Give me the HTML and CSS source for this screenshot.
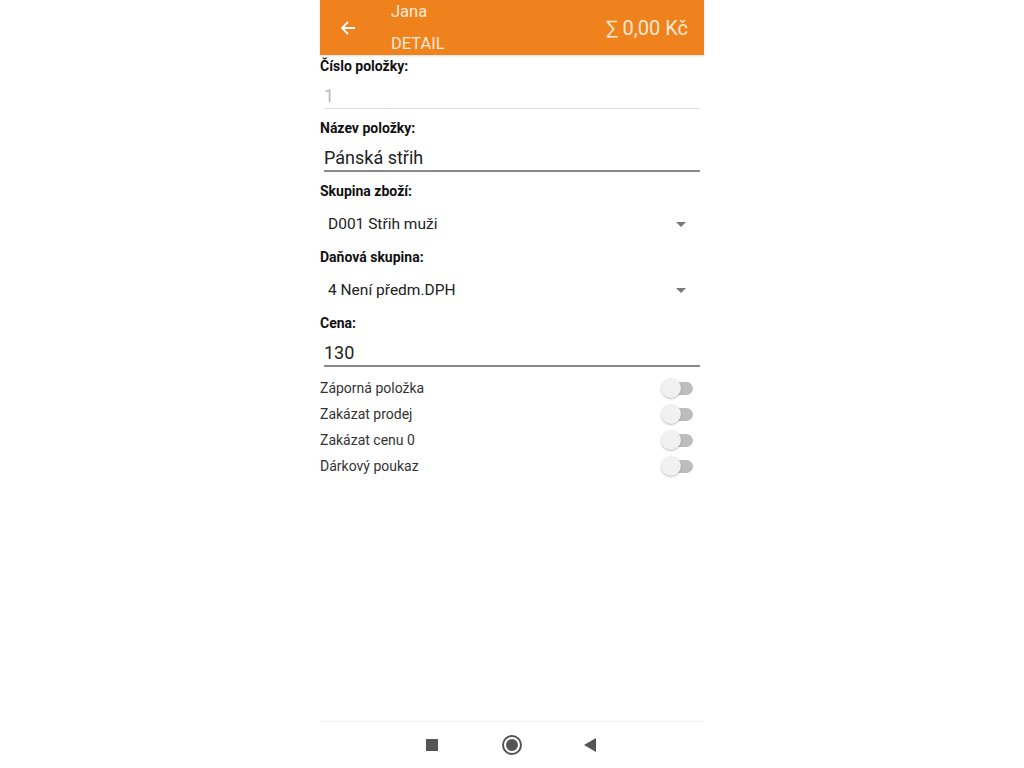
FILE: index.html
```html
<!DOCTYPE html>
<html lang="cs">
<head>
    <meta charset="UTF-8">
    <meta name="viewport" content="width=device-width, initial-scale=1.0">
    <title>Detail položky</title>
    <link rel="stylesheet" href="styles.css">
</head>
<body>
    <div class="phone">
        <div class="toolbar">
            <div class="back">
                <svg width="16" height="16" viewBox="0 0 16 16">
                    <path d="M15 8H2M8 2L2 8l6 6" fill="none" stroke="#fff" stroke-width="1.8"/>
                </svg>
            </div>
            <div class="titles">
                <div class="user">Jana</div>
                <div class="subtitle">DETAIL</div>
            </div>
            <div class="total">∑ 0,00 Kč</div>
        </div>

        <div class="form">
            <div class="label">Číslo položky:</div>
            <div class="input disabled">1</div>

            <div class="label">Název položky:</div>
            <div class="input">Pánská střih</div>

            <div class="label">Skupina zboží:</div>
            <div class="select">
                <span>D001 Střih muži</span>
                <span class="caret"></span>
            </div>

            <div class="label">Daňová skupina:</div>
            <div class="select">
                <span>4 Není předm.DPH</span>
                <span class="caret"></span>
            </div>

            <div class="label">Cena:</div>
            <div class="input">130</div>

            <div class="switches">
                <div class="switch-row"><span>Záporná položka</span><span class="switch"></span></div>
                <div class="switch-row"><span>Zakázat prodej</span><span class="switch"></span></div>
                <div class="switch-row"><span>Zakázat cenu 0</span><span class="switch"></span></div>
                <div class="switch-row"><span>Dárkový poukaz</span><span class="switch"></span></div>
            </div>
        </div>

        <div class="navbar">
            <span class="nav-square"></span>
            <span class="nav-home"></span>
            <span class="nav-back"></span>
        </div>
    </div>
</body>
</html>
```

FILE: styles.css
```css
body {
    margin: 0;
    background-color: #fff;
    font-family: Roboto, "Noto Sans", Arial, sans-serif;
}
.phone {
    width: 384px;
    height: 768px;
    margin: 0 auto;
    display: flex;
    flex-direction: column;
}
.toolbar {
    height: 55px;
    flex-shrink: 0;
    background-color: #f0821e;
    display: flex;
    align-items: center;
    color: #fde9d3;
    box-shadow: 0 1px 2px rgba(0, 0, 0, 0.15);
}
.back {
    width: 56px;
    display: flex;
    justify-content: center;
    margin-top: 1px;
}
.titles {
    flex-grow: 1;
    align-self: flex-start;
    padding-left: 15px;
    height: 55px;
}
.user {
    font-size: 16.5px;
    line-height: 24px;
}
.subtitle {
    font-size: 16.5px;
    line-height: 24px;
    margin-top: 8px;
}
.total {
    font-size: 20px;
    padding-right: 16px;
    margin-top: 1px;
}
.form {
    flex-grow: 1;
    display: flex;
    flex-direction: column;
    padding-top: 1px;
}
.label {
    font-size: 14px;
    font-weight: bold;
    color: #111;
    line-height: 20px;
}
.input {
    margin: 0 4px 9px 4px;
    font-size: 18px;
    color: #222;
    line-height: 20px;
    padding: 10px 0 2px 0;
    border-bottom: 2px solid #888;
}
.input.disabled {
    color: #bbb;
    border-bottom: 1px solid #ddd;
}
.select {
    display: flex;
    justify-content: space-between;
    align-items: center;
    height: 46px;
    margin: 0 18px 0 8px;
    font-size: 15.5px;
    color: #222;
}
.caret {
    width: 0;
    height: 0;
    border-left: 5px solid transparent;
    border-right: 5px solid transparent;
    border-top: 5px solid #777;
}
.switches {
    margin-top: -1px;
    display: flex;
    flex-direction: column;
}
.switch-row {
    height: 26px;
    display: flex;
    justify-content: space-between;
    align-items: center;
    font-size: 14px;
    color: #333;
}
.switch {
    position: relative;
    width: 24px;
    height: 13px;
    background-color: #bdbdbd;
    border-radius: 7px;
    margin-right: 11px;
}
.switch::before {
    content: "";
    position: absolute;
    left: -8px;
    top: -4px;
    width: 20px;
    height: 20px;
    border-radius: 50%;
    background-color: #f1f1f1;
    box-shadow: 0 1px 2px rgba(0, 0, 0, 0.25);
}
.navbar {
    height: 46px;
    border-top: 1px solid #f3f3f3;
    display: flex;
    align-items: center;
    padding-left: 106px;
}
.nav-square {
    width: 12px;
    height: 12px;
    background-color: #555;
}
.nav-home {
    width: 12px;
    height: 12px;
    margin-left: 66px;
    border-radius: 50%;
    background-color: #555;
    border: 2px solid #fff;
    box-shadow: 0 0 0 2px #555;
}
.nav-back {
    width: 0;
    height: 0;
    margin-left: 64px;
    border-top: 7px solid transparent;
    border-bottom: 7px solid transparent;
    border-right: 12px solid #555;
}
```
